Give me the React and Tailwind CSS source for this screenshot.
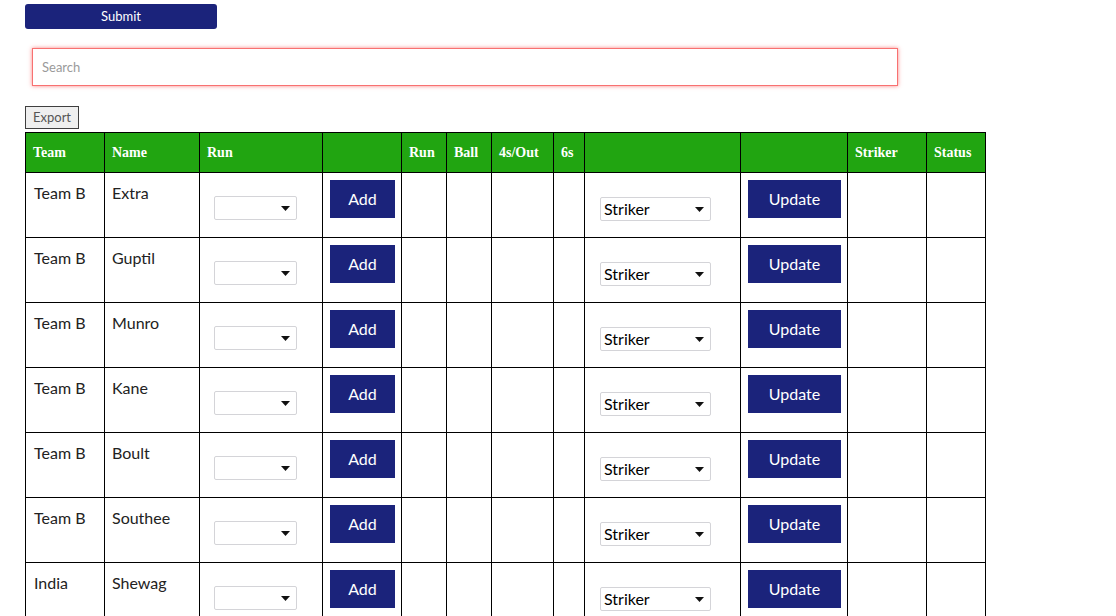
import React from 'react';

const players = [
  { team: 'Team B', name: 'Extra' },
  { team: 'Team B', name: 'Guptil' },
  { team: 'Team B', name: 'Munro' },
  { team: 'Team B', name: 'Kane' },
  { team: 'Team B', name: 'Boult' },
  { team: 'Team B', name: 'Southee' },
  { team: 'India', name: 'Shewag' },
  { team: 'India', name: 'Sachin' },
];

const colWidths = [79, 95, 123, 79, 45, 45, 62, 31, 156, 107, 79, 59];

const SelectBox = ({ width, value, options }) => (
  <div className="relative" style={{ width }}>
    <select
      defaultValue={value}
      className="block w-full h-[24px] appearance-none bg-white border border-[#d4d4d8] rounded-[2px] pl-[3px] pr-5 text-[16px] leading-[20px] text-black outline-none"
    >
      {options.map((o) => (
        <option key={o}>{o}</option>
      ))}
    </select>
    {/* little arrow like the native one */}
    <svg className="absolute right-[7px] top-[10px] pointer-events-none" width="9" height="5" viewBox="0 0 9 5">
      <path d="M0 0 L9 0 L4.5 5 Z" fill="#111" />
    </svg>
  </div>
);

const App = () => {
  return (
    <div className="min-h-screen bg-white text-[#222] font-['Lato','Noto_Sans',sans-serif]">
      {/* Top controls */}
      <div className="flex pl-[25px] pt-[4px]">
        <button className="w-[192px] h-[25px] bg-[#1b237b] text-white text-[13px] rounded-[3px] leading-[25px]">
          Submit
        </button>
      </div>

      <div className="flex pl-[32px] mt-[19px]">
        <input
          placeholder="Search"
          className="w-[866px] h-[38px] border border-[#f87171] shadow-[0_0_4px_rgba(248,80,80,0.7)] px-[9px] text-[13px] placeholder:text-[#9a9a9a] outline-none"
        />
      </div>

      <div className="flex pl-[25px] mt-[20px]">
        <button className="h-[23px] px-[7px] border border-[#3f3f3f] bg-[#efefef] text-[13px] text-[#555]">
          Export
        </button>
      </div>

      {/* Scoreboard table */}
      <div className="pl-[25px] mt-[3px]">
        <table className="table-fixed border-collapse w-[961px]">
          <colgroup>
            {colWidths.map((w, i) => (
              <col key={i} style={{ width: w }} />
            ))}
          </colgroup>
          <thead>
            <tr className="h-[40px] bg-[#21a511] text-white font-['Liberation_Serif',serif] text-[14px] font-bold">
              {['Team', 'Name', 'Run', '', 'Run', 'Ball', '4s/Out', '6s', '', '', 'Striker', 'Status'].map((h, i) => (
                <th key={i} className="border border-black text-left font-bold px-[7px] align-middle">
                  {h}
                </th>
              ))}
            </tr>
          </thead>
          <tbody>
            {players.map((p, idx) => (
              <tr key={idx} className="h-[65px] align-top text-[16px]">
                <td className="border border-black px-[8px] pt-[8px] leading-[24px]">{p.team}</td>
                <td className="border border-black px-[7px] pt-[8px] leading-[24px]">{p.name}</td>
                <td className="border border-black pl-[14px] pt-[23px]">
                  <SelectBox width={83} value="" options={['', '0', '1', '2', '3', '4', '6']} />
                </td>
                <td className="border border-black pl-[7px] pt-[7px]">
                  <button className="block w-[65px] h-[38px] bg-[#1b237b] text-white text-[16px]">Add</button>
                </td>
                <td className="border border-black"></td>
                <td className="border border-black"></td>
                <td className="border border-black"></td>
                <td className="border border-black"></td>
                <td className="border border-black pl-[15px] pt-[24px]">
                  <SelectBox width={111} value="Striker" options={['Striker', 'Non Striker', 'Out']} />
                </td>
                <td className="border border-black pl-[7px] pt-[7px]">
                  <button className="block w-[93px] h-[38px] bg-[#1b237b] text-white text-[16px]">Update</button>
                </td>
                <td className="border border-black"></td>
                <td className="border border-black"></td>
              </tr>
            ))}
          </tbody>
        </table>
      </div>
    </div>
  );
};

export default App;
